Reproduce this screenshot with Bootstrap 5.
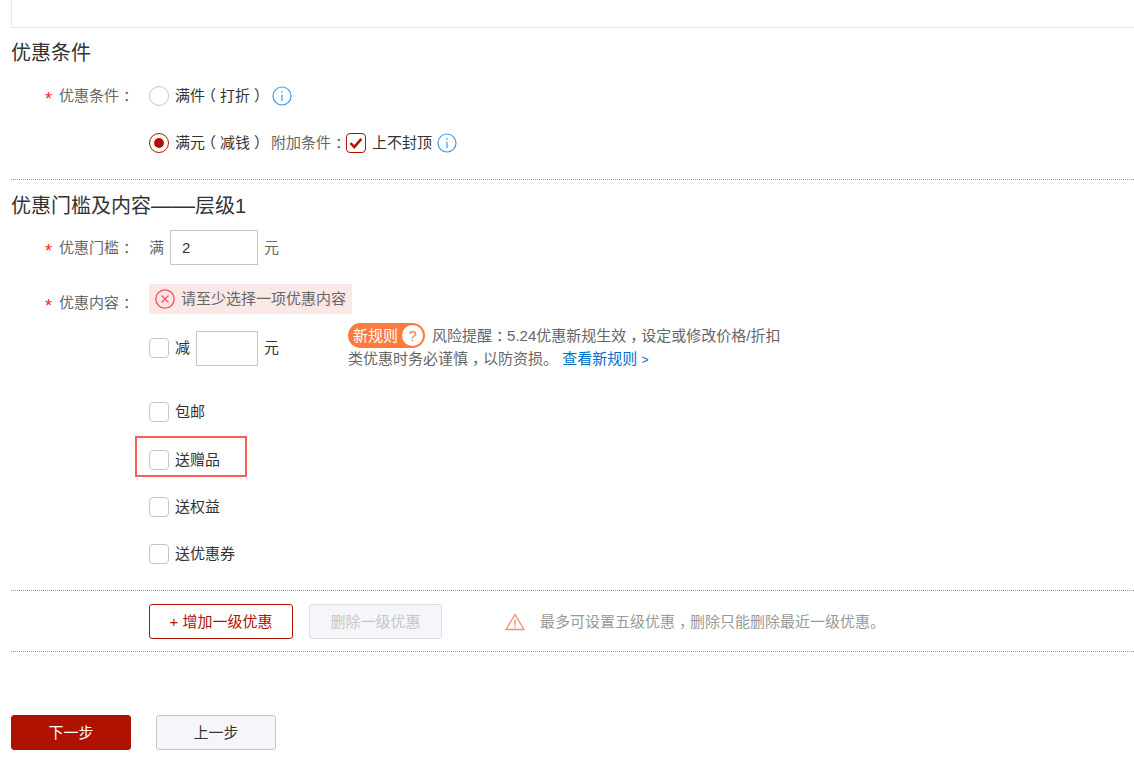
<!DOCTYPE html>
<html lang="zh-CN">
<head>
  <meta charset="UTF-8">
  <title>优惠设置</title>
  <link href="https://cdn.jsdelivr.net/npm/bootstrap@5.3.0/dist/css/bootstrap.min.css" rel="stylesheet">
  <style>
    body {
      font-family: "Liberation Sans", "Noto Sans CJK SC", sans-serif;
      font-size: 15px;
      line-height: 20px;
      color: #333;
      background: #fff;
      padding-left: 11px;
      overflow-x: hidden;
    }
    .top-box { height: 28px; border-left: 1px solid #e6e6e6; border-bottom: 1px solid #e6e6e6; }
    .sec-title { font-size: 20px; line-height: 26px; font-weight: 400; color: #333; margin: 0; }
    .long-dash { font-size: 22px; }
    .dot-line { border-top: 1px dotted #999; }
    .field-label { width: 138px; flex: none; padding-left: 48px; color: #666; position: relative; white-space: nowrap; }
    .req { position: absolute; left: 34px; top: 3px; color: #f5222d; font-size: 18px; }
    /* full-width punctuation sits centred in the cell in the reference */
    .ink-r { margin-left: 4px; margin-right: -4px; }
    .ink-l { margin-left: -4px; margin-right: 4px; }
    .form-check-input.tick {
      width: 20px; height: 20px; margin: 0 6px 0 0; flex: none;
      border: 1px solid #c4c6cf; background-color: #fff; box-shadow: none; float: none;
    }
    .form-check-input.tick[type=checkbox] { border-radius: 4px; }
    .form-check-input.tick[type=radio]:checked {
      border-color: #b01201; background-color: #fff;
      background-image: url("data:image/svg+xml,%3csvg xmlns='http://www.w3.org/2000/svg' viewBox='0 0 20 20'%3e%3ccircle cx='10' cy='10' r='5.5' fill='%23b01201'/%3e%3c/svg%3e");
      background-size: 100% 100%;
    }
    .form-check-input.tick[type=checkbox]:checked {
      border-color: #b01201; background-color: #fff;
      background-image: url("data:image/svg+xml,%3csvg xmlns='http://www.w3.org/2000/svg' viewBox='0 0 20 20'%3e%3cpath d='M4 10l4 4.500 8-9' fill='none' stroke='%23b01201' stroke-width='2.800'/%3e%3c/svg%3e");
      background-size: 100% 100%;
    }
    .num-box { height: 35px; border: 1px solid #c4c6cf; background: #fff; padding: 0 11px; font-size: 15px; color: #333; border-radius: 0; outline: none; }
    .w-88 { width: 88px; }
    .w-62 { width: 62px; }
    .muted-txt { color: #666; }
    .err-box { background: #fae8e7; height: 30px; width: 203px; padding-left: 6px; color: #666; }
    .tip-block { width: 440px; height: 46px; margin: -1px 0 1px 69px; color: #666; line-height: 23px; white-space: nowrap; }
    .new-tag { display: inline-flex; align-items: center; height: 25px; margin: -1px 7px -1px 0; background: #ff7a3d; color: #fff; border-radius: 13px; padding: 0 2px 0 5px; vertical-align: top; }
    .new-q { width: 21px; height: 21px; border-radius: 50%; background: #fff; color: #ff7a3d; text-align: center; line-height: 21px; margin-left: 4px; }
    .rule-link { color: #0070cc; text-decoration: none; }
    .link-arrow { font-size: 12px; }
    .red-frame { width: 112px; height: 41px; border: 2px solid #fb5f52; margin-left: -14px; padding: 7px 0 0 12px; }
    .btn.btn-add, .btn.btn-del, .btn.btn-next, .btn.btn-prev { height: 35px; font-size: 15px; line-height: 20px; padding: 0; border-radius: 3px; }
    .btn.btn-add { width: 144px; background: #fff; border: 1px solid #b01201; color: #b01201; }
    .btn.btn-del { width: 133px; background: #f5f6f9; border: 1px solid #dcdde3; color: #c6c6c6; opacity: 1; margin-left: 16px; }
    .btn.btn-next { width: 120px; background: #b01201; border: 1px solid #b01201; color: #fff; }
    .btn.btn-prev { width: 120px; background: #f5f6f9; border: 1px solid #c4c6cf; color: #333; margin-left: 25px; }
    .warn-txt { color: #999; margin-left: 15px; }
    .mt-12 { margin-top: 12px; } .mt-13 { margin-top: 13px; } .mt-11 { margin-top: 11px; }
    .mt-14 { margin-top: 14px; } .mt-19 { margin-top: 19px; }
    .mt-20 { margin-top: 20px; } .mt-26 { margin-top: 26px; } .mt-27 { margin-top: 27px; }
    .mt-31 { margin-top: 31px; } .mt-63 { margin-top: 63px; }
    .gap-l6 { margin-left: 6px; } .gap-r6 { margin-right: 6px; }
    .info-a { margin-left: 7px; } .info-b { margin-left: 5px; }
    .warn-icon { margin-left: 63px; }
    .action-row { padding: 13px 0 12px 138px; }
    .label-top { padding-top: 9px; }
    .label-top .req { top: 12px; }
  </style>
</head>
<body>
  <div class="top-box"></div>

  <h5 class="sec-title mt-12">优惠条件</h5>
  <div class="d-flex align-items-center mt-20">
    <div class="field-label"><span class="req">*</span>优惠条件<span class="ink-r">：</span></div>
    <input class="form-check-input tick" type="radio" name="cond">
    <span class="text-nowrap">满件<span class="ink-l">（</span>打折<span class="ink-r">）</span></span>
    <svg class="info-a" width="20" height="20" viewBox="0 0 20 20"><circle cx="10" cy="10" r="9" fill="none" stroke="#3b9cf0" stroke-width="1.200"/><path d="M10 8.500v6.500M10 5v1.800" stroke="#3b9cf0" stroke-width="1.200"/></svg>
  </div>
  <div class="d-flex align-items-center mt-27">
    <div class="field-label"></div>
    <input class="form-check-input tick" type="radio" name="cond" checked>
    <span class="text-nowrap">满元<span class="ink-l">（</span>减钱<span class="ink-r">）</span></span>
    <span class="muted-txt gap-l6 text-nowrap">附加条件<span class="ink-r">：</span></span>
    <input class="form-check-input tick" type="checkbox" checked>
    <span class="text-nowrap">上不封顶</span>
    <svg class="info-b" width="20" height="20" viewBox="0 0 20 20"><circle cx="10" cy="10" r="9" fill="none" stroke="#3b9cf0" stroke-width="1.200"/><path d="M10 8.500v6.500M10 5v1.800" stroke="#3b9cf0" stroke-width="1.200"/></svg>
  </div>

  <div class="dot-line mt-26"></div>
  <h5 class="sec-title mt-13">优惠门槛及内容<span class="long-dash">——</span>层级1</h5>

  <div class="d-flex align-items-center mt-11">
    <div class="field-label"><span class="req">*</span>优惠门槛<span class="ink-r">：</span></div>
    <span class="muted-txt gap-r6">满</span>
    <input class="num-box w-88" type="text" value="2">
    <span class="muted-txt gap-l6">元</span>
  </div>

  <div class="d-flex mt-19">
    <div class="field-label label-top"><span class="req">*</span>优惠内容<span class="ink-r">：</span></div>
    <div class="flex-grow-1">
      <div class="err-box d-flex align-items-center">
        <svg width="20" height="20" viewBox="0 0 20 20"><circle cx="10" cy="10" r="9.200" fill="none" stroke="#f5505a" stroke-width="1.300"/><path d="M6.500 6.500l7 7M13.500 6.500l-7 7" stroke="#f5505a" stroke-width="1.200"/></svg>
        <span class="gap-l6 text-nowrap">请至少选择一项优惠内容</span>
      </div>
      <div class="d-flex align-items-center mt-11">
        <input class="form-check-input tick" type="checkbox">
        <span class="gap-r6">减</span>
        <input class="num-box w-62" type="text">
        <span class="gap-l6">元</span>
        <div class="tip-block">
          <div><span class="new-tag">新规则<span class="new-q">?</span></span>风险提醒<span class="ink-r">：</span>5.24优惠新规生效<span class="ink-r">，</span>设定或修改价格/折扣</div>
          <div>类优惠时务必谨慎<span class="ink-r">，</span>以防资损。 <a class="rule-link" href="#">查看新规则 <span class="link-arrow">&gt;</span></a></div>
        </div>
      </div>
      <div class="d-flex align-items-center mt-31">
        <input class="form-check-input tick" type="checkbox"><span>包邮</span>
      </div>
      <div class="d-flex align-items-center red-frame mt-14">
        <input class="form-check-input tick" type="checkbox"><span>送赠品</span>
      </div>
      <div class="d-flex align-items-center mt-20">
        <input class="form-check-input tick" type="checkbox"><span>送权益</span>
      </div>
      <div class="d-flex align-items-center mt-27">
        <input class="form-check-input tick" type="checkbox"><span>送优惠券</span>
      </div>
    </div>
  </div>

  <div class="dot-line mt-26"></div>
  <div class="d-flex align-items-center action-row">
    <button class="btn btn-add" type="button">+ 增加一级优惠</button>
    <button class="btn btn-del" type="button" disabled>删除一级优惠</button>
    <svg class="warn-icon" width="20" height="18" viewBox="0 0 20 18"><path d="M10 1.500L1 16.500h18zM10 6.500v6M10 13.500v1.500" fill="none" stroke="#f98a6f" stroke-width="1.300"/></svg>
    <span class="warn-txt">最多可设置五级优惠<span class="ink-r">，</span>删除只能删除最近一级优惠。</span>
  </div>
  <div class="dot-line"></div>

  <div class="d-flex mt-63">
    <button class="btn btn-next" type="button">下一步</button>
    <button class="btn btn-prev" type="button">上一步</button>
  </div>
</body>
</html>
